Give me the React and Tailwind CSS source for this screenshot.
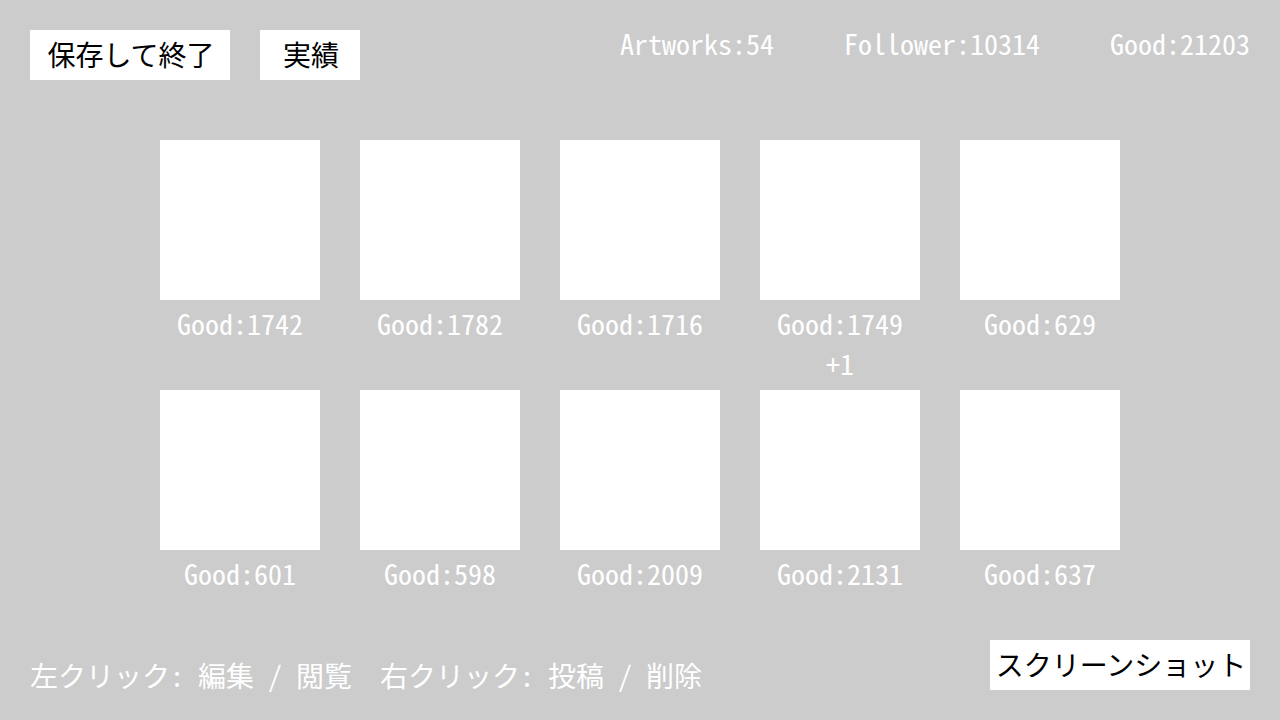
const stats = ["Artworks:54", "Follower:10314", "Good:21203"];

const artworks = [
  { id: 1, good: 1742 },
  { id: 2, good: 1782 },
  { id: 3, good: 1716 },
  { id: 4, good: 1749, gain: 1 },
  { id: 5, good: 629 },
  { id: 6, good: 601 },
  { id: 7, good: 598 },
  { id: 8, good: 2009 },
  { id: 9, good: 2131 },
  { id: 10, good: 637 },
];

function ActionButton({ className, children }) {
  return (
    <button
      type="button"
      className={`flex h-[50px] items-center justify-center whitespace-nowrap bg-white pb-0.5 pl-0.5 text-black ${className}`}
    >
      {children}
    </button>
  );
}

function Artwork({ id, good, gain }) {
  return (
    <li className="flex w-40 flex-col items-center">
      <button type="button" aria-labelledby={`artwork-${id}`} className="size-40 bg-white" />
      <p id={`artwork-${id}`} className="mt-[10px]">Good:{good}</p>
      <p className="mt-3.5 h-[26px]">{gain ? `+${gain}` : ""}</p>
    </li>
  );
}

export default function App() {
  return (
    <div
      lang="ja"
      className="flex min-h-screen flex-col bg-[#cccccc] p-[30px] font-['Noto_Sans_CJK_JP',sans-serif] text-[28px] leading-[26px] text-white [font-feature-settings:'hwid']"
    >
      <header className="flex items-start justify-between">
        <nav className="flex gap-[30px]">
          <ActionButton className="w-[200px]">保存して終了</ActionButton>
          <ActionButton className="w-[100px]">実績</ActionButton>
        </nav>
        <div className="flex gap-[70px]">
          {stats.map((stat) => (
            <p key={stat}>{stat}</p>
          ))}
        </div>
      </header>

      <main className="mt-[60px] flex justify-center">
        <ul className="grid grid-cols-5 gap-x-10 gap-y-3.5">
          {artworks.map((artwork) => (
            <Artwork key={artwork.id} {...artwork} />
          ))}
        </ul>
      </main>

      <footer className="mt-auto flex items-end justify-between">
        <p className="flex gap-7 pb-0.5">
          <span>左クリック: 編集 / 閲覧</span>
          <span>右クリック: 投稿 / 削除</span>
        </p>
        <ActionButton className="w-[260px]">スクリーンショット</ActionButton>
      </footer>
    </div>
  );
}
